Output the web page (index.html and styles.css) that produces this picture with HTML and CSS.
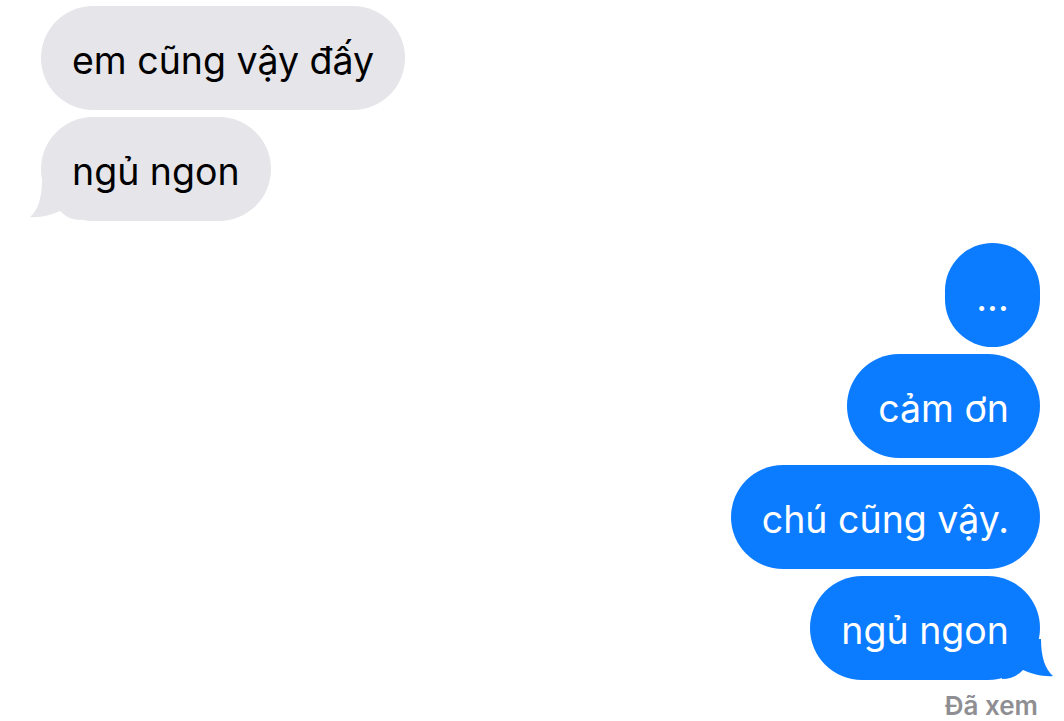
FILE: index.html
```html
<!DOCTYPE html>
<html lang="vi">
<head>
    <meta charset="UTF-8">
    <meta name="viewport" content="width=device-width, initial-scale=1.0">
    <title>Messages</title>
    <link rel="stylesheet" href="styles.css">
</head>
<body>
    <div class="Chat">
        <div class="Group Group-Received">
            <div class="Bubble Bubble-Received">
                <span>em cũng vậy đấy</span>
            </div>
            <div class="Bubble Bubble-Received">
                <span>ngủ ngon</span>
                <svg class="Tail Tail-Left" width="52" height="41" viewBox="0 0 52 41">
                    <path d="M13,0 C13,18 9,30 1,37 C10,38 22,35 31,31 C36,36 42,40 52,40 L52,0 Z" fill="#e5e5ea"/>
                </svg>
            </div>
        </div>
        <div class="Group Group-Sent">
            <div class="Bubble Bubble-Sent Bubble-Dots">
                <span>...</span>
            </div>
            <div class="Bubble Bubble-Sent">
                <span>cảm ơn</span>
            </div>
            <div class="Bubble Bubble-Sent">
                <span>chú cũng vậy.</span>
            </div>
            <div class="Bubble Bubble-Sent">
                <span>ngủ ngon</span>
                <svg class="Tail Tail-Right" width="52" height="41" viewBox="0 0 52 41">
                    <path d="M13,0 C13,18 9,30 1,37 C10,38 22,35 31,31 C36,36 42,40 52,40 L52,0 Z" fill="#0b7bff"/>
                </svg>
            </div>
            <div class="Read-Status">Đã xem</div>
        </div>
    </div>
</body>
</html>
```

FILE: styles.css
```css
body {
    margin: 0;
    background-color: #ffffff;
    font-family: Inter, "Noto Sans", sans-serif;
}

.Chat {
    padding: 6px 24px 0 41px;
}

.Group {
    display: flex;
    flex-direction: column;
    gap: 7px;
}

.Group-Received {
    align-items: flex-start;
}

.Group-Sent {
    margin-top: 22px;
    align-items: flex-end;
}

.Bubble {
    height: 104px;
    padding: 0 31px;
    box-sizing: border-box;
    border-radius: 52px;
    display: flex;
    align-items: center;
    font-size: 37.5px;
    position: relative;
    white-space: nowrap;
}

.Bubble span {
    position: relative;
    z-index: 1;
    top: 2px;
}

.Bubble-Received {
    background-color: #e5e5ea;
    color: #000000;
}

.Bubble-Sent {
    background-color: #0b7bff;
    color: #ffffff;
}

.Bubble-Dots {
    width: 95px;
    padding: 0;
    justify-content: center;
}

.Tail {
    position: absolute;
    bottom: 0;
}

.Tail-Left {
    left: -12px;
}

.Tail-Right {
    right: -14px;
    transform: scaleX(-1);
}

.Read-Status {
    margin-top: 6px;
    margin-right: 2px;
    font-size: 26px;
    line-height: 1;
    font-weight: 600;
    color: #8e8e93;
}
```
